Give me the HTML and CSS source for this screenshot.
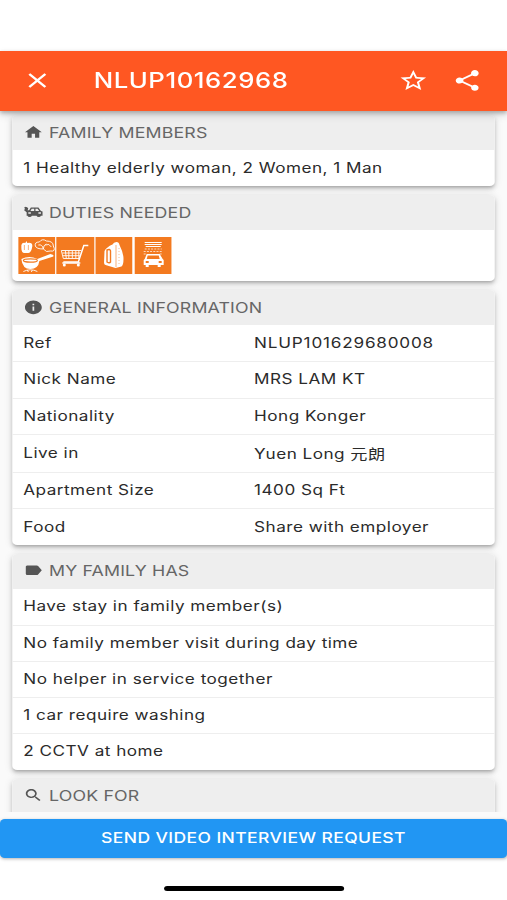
FILE: index.html
```html
<!DOCTYPE html>
<html lang="en">
<head>
<meta charset="utf-8">
<title>NLUP10162968</title>
<link rel="stylesheet" href="styles.css">
</head>
<body>
<div class="screen">
  <header class="bar">
    <svg class="icon close" viewBox="0 0 24 24"><path d="M19 6.41 17.59 5 12 10.59 6.41 5 5 6.41 10.59 12 5 17.59 6.41 19 12 13.41 17.59 19 19 17.59 13.41 12z"/></svg>
    <h1>NLUP10162968</h1>
    <svg class="icon" viewBox="0 0 24 24"><path d="M22 9.24l-7.19-.62L12 2 9.19 8.63 2 9.24l5.46 4.73L5.82 21 12 17.27 18.18 21l-1.63-7.03L22 9.24zM12 15.4l-3.76 2.27 1-4.28-3.32-2.88 4.38-.38L12 6.1l1.71 4.04 4.38.38-3.32 2.88 1 4.28L12 15.4z"/></svg>
    <svg class="icon" viewBox="0 0 24 24"><path d="M18 16.08c-.76 0-1.44.3-1.96.77L8.91 12.7c.05-.23.09-.46.09-.7s-.04-.47-.09-.7l7.05-4.11c.54.5 1.25.81 2.04.81 1.66 0 3-1.34 3-3s-1.34-3-3-3-3 1.34-3 3c0 .24.04.47.09.7L8.04 9.81C7.5 9.31 6.79 9 6 9c-1.66 0-3 1.34-3 3s1.34 3 3 3c.79 0 1.5-.31 2.04-.81l7.12 4.16c-.05.21-.08.43-.08.65 0 1.61 1.31 2.92 2.92 2.92s2.92-1.31 2.92-2.92-1.31-2.92-2.92-2.92z"/></svg>
  </header>

  <main class="content">
    <section class="card">
      <h2><svg viewBox="0 0 24 24"><path d="M10 20v-6h4v6h5v-8h3L12 3 2 12h3v8z"/></svg><span>FAMILY MEMBERS</span></h2>
      <div class="row"><span>1 Healthy elderly woman, 2 Women, 1 Man</span></div>
    </section>

    <section class="card">
      <h2><svg viewBox="0 0 24 24"><path fill-rule="evenodd" d="M1 5l2-1 2 1 1 2-1 2h2l2-4h9l3 5 2 1v6h-2a2.700 2.700 0 0 1-5.200 0h-5.600a2.700 2.700 0 0 1-5.200 0H4v-5L1 9l1-2zM10 7l-1.500 3H13V7zM14.500 7v3H19l-2-3zM6 12v2h3v-2zM18 12v2h3v-2z"/></svg><span>DUTIES NEEDED</span></h2>
      <div class="duties">
        <svg class="tile" viewBox="0 0 37 37" preserveAspectRatio="none">
          <g fill="#fff"><path d="M3 8q1-3 4-2l1-2 1 2q5-1 5 3-1 7-4 7H6Q3 16 3 11z"/><path d="M3 22q8-4 16 0l13-5 3 1v1.500l-14 4.500q-1 8-9 8-8 0-9-10z"/></g>
          <g fill="none" stroke="#fff" stroke-width=".9"><path d="M17 9q-1-4 4-4 3-4 7-1 7 0 7 5 3 6-3 5-4 2-7-2-7 0-8-3zM20 8q4-1 5 4M27 8q4-2 6 2M25 12q0-4 3-5M5 34.500q7-3.500 14 0M9 33l1 2m4-2-1 2"/></g>
          <path d="M6 8v5m4-5v5" stroke="#f37a20" stroke-width=".6"/><ellipse cx="12" cy="23.500" rx="7" ry="1.700" fill="none" stroke="#f37a20" stroke-width="1.200"/>
        </svg>
        <svg class="tile" viewBox="0 0 37 37" preserveAspectRatio="none">
          <g fill="none" stroke="#fff"><path d="M32 8.500h-4.500l-5.500 16.500H7" stroke-width="1.500"/><path d="M5 13.500h20M7 21.500h16M5 13.500l2 8M6 16h18M6.500 18.700h17M9 13.500l1 8m2.500-8v8m3.500-8v8m3.500-8v8m3-8v8" stroke-width=".9"/><path d="M6 26h18" stroke-width="1.500"/></g>
          <g fill="#fff"><circle cx="8" cy="28" r="1.500"/><circle cx="22" cy="28" r="1.500"/></g>
        </svg>
        <svg class="tile" viewBox="0 0 37 37" preserveAspectRatio="none">
          <path fill="#fff" d="M9 14q2-4 8-6.500 1-2.500 4-2.500 2.500 0 3 3 4 8 4 14 0 6-2 7.500l-6 1.500-10-3q-1.500-.5-1.500-2.500z"/>
          <path d="M11.500 13q3-1.500 3.500 1v11q-1 1.500-3.500 0z" fill="none" stroke="#f37a20" stroke-width="1.400"/>
          <path d="M20.500 8v22" stroke="#f37a20" stroke-width=".6"/><path d="M23.500 11v17" stroke="#f37a20" stroke-width=".5" stroke-dasharray="1 2"/>
        </svg>
        <svg class="tile" viewBox="0 0 37 37" preserveAspectRatio="none">
          <g fill="none" stroke="#fff"><path d="M10 5.500h17M10 7.500h17M11 9.500h15" stroke-width="1"/><path d="M10 12h17M9 14.500h19M9 17h3m13 0h3" stroke-width=".7" stroke-dasharray="2 1.200"/></g>
          <path fill="#fff" fill-rule="evenodd" d="M12 17h13l3 5 1 1v5h-3v2h-3v-2h-9v2h-3v-2H9v-5l1-1zM13 18.500l-1 3.500h13l-1-3.500zM11 24v2h3v-2zM24 24v2h3v-2z"/>
        </svg>
      </div>
    </section>

    <section class="card">
      <h2><svg viewBox="0 0 24 24"><path d="M12 2C6.480 2 2 6.480 2 12s4.480 10 10 10 10-4.480 10-10S17.520 2 12 2zm1 15h-2v-6h2v6zm0-8h-2V7h2v2z"/></svg><span>GENERAL INFORMATION</span></h2>
      <div class="row"><span>Ref</span><span class="code">NLUP101629680008</span></div>
      <div class="row"><span>Nick Name</span><span>MRS LAM KT</span></div>
      <div class="row"><span>Nationality</span><span>Hong Konger</span></div>
      <div class="row tall"><span>Live in</span><span>Yuen Long 元朗</span></div>
      <div class="row"><span>Apartment Size</span><span>1400 Sq Ft</span></div>
      <div class="row"><span>Food</span><span>Share with employer</span></div>
    </section>

    <section class="card">
      <h2><svg viewBox="0 0 24 24"><path d="M17.630 5.840C17.270 5.330 16.670 5 16 5L5 5.010C3.900 5.010 3 5.900 3 7v10c0 1.100.9 1.990 2 1.990L16 19c.67 0 1.270-.33 1.630-.84L22 12l-4.370-6.160z"/></svg><span>MY FAMILY HAS</span></h2>
      <div class="row"><span>Have stay in family member(s)</span></div>
      <div class="row"><span>No family member visit during day time</span></div>
      <div class="row"><span>No helper in service together</span></div>
      <div class="row"><span>1 car require washing</span></div>
      <div class="row"><span>2 CCTV at home</span></div>
    </section>

    <section class="card">
      <h2><svg viewBox="0 0 24 24"><path d="M15.500 14h-.79l-.28-.27C15.410 12.590 16 11.110 16 9.500 16 5.910 13.090 3 9.500 3S3 5.910 3 9.500 5.910 16 9.500 16c1.610 0 3.090-.59 4.230-1.570l.27.28v.79l5 4.990L20.490 19l-4.990-5zm-6 0C7.010 14 5 11.990 5 9.500S7.010 5 9.500 5 14 7.010 14 9.500 11.990 14 9.500 14z"/></svg><span>LOOK FOR</span></h2>
      <div class="row"></div>
    </section>
  </main>

  <footer>
    <button>SEND VIDEO INTERVIEW REQUEST</button>
    <div class="home"></div>
  </footer>
</div>
</body>
</html>
```
FILE: styles.css
```css
* { box-sizing: border-box; }
html, body { margin: 0; width: 507px; height: 900px; overflow: hidden; background: #fff; }

/* Phone layout is 414 units wide and stretched to fill the window. */
.screen {
  width: 414px;
  height: 900px;
  padding-top: 51px;
  display: flex;
  flex-direction: column;
  transform: scaleX(1.22464);
  transform-origin: 0 0;
  font-family: Inter, "Noto Sans CJK TC", sans-serif;
  font-size: 14px;
  color: #2b2b2b;
}

.bar {
  position: relative;
  z-index: 1;
  flex: none;
  height: 59.500px;
  padding: 0 20px 0 17.500px;
  display: flex;
  align-items: center;
  background: #ff5722;
  color: #fff;
  box-shadow: 0 2px 4px rgba(0,0,0,.28), 0 4px 8px rgba(0,0,0,.12);
}
.bar h1 { flex: 1; margin: 0 0 0 34px; font-size: 21px; font-weight: 500; line-height: 24px; letter-spacing: .45px; }
.icon { width: 25px; height: 25px; fill: #fff; }
.icon + .icon { margin-left: 19.500px; }

.content {
  flex: none;
  height: 701.500px;
  padding: 4.500px 10px 0;
  display: flex;
  flex-direction: column;
  gap: 9px;
  overflow: hidden;
  background: #fafafa;
}
.card {
  flex: none;
  border-radius: 4px;
  background: #fff;
  overflow: hidden;
  box-shadow: 0 3px 3px -2px rgba(0,0,0,.2), 0 3px 4px rgba(0,0,0,.14), 0 1px 8px rgba(0,0,0,.12);
}
.card h2 {
  margin: 0;
  height: 35px;
  padding: 0 9px 1px 8.500px;
  display: flex;
  align-items: center;
  gap: 5px;
  background: #eee;
  color: #666;
  font-size: 14.500px;
  font-weight: 400;
  letter-spacing: .13px;
}
.card h2 svg { width: 16.500px; height: 16.500px; fill: #555; }
.row {
  height: 36.200px;
  padding: 0 9px 2px;
  display: grid;
  grid-template-columns: 188.500px 1fr;
  align-items: center;
  letter-spacing: .39px;
  white-space: nowrap;
}
.row + .row { border-top: 1px solid #eee; }
.row.tall { height: 38.500px; }
.row .code { letter-spacing: .65px; }
.duties { height: 51px; padding: 7px 4.500px; display: flex; gap: 1.700px; }
.tile { width: 30.200px; height: 37px; background: #f37a20; }

footer { display: flex; flex-direction: column; align-items: center; background: linear-gradient(#fafafa 12px, #fff 12px); padding-top: 7px; }
button {
  width: 100%;
  height: 38.500px;
  border: 0;
  border-radius: 4px;
  padding: 0 0 1px;
  background: #2196f3;
  color: #fff;
  font: 500 14.300px Inter, sans-serif;
  letter-spacing: .33px;
  box-shadow: 0 1px 3px rgba(0,0,0,.3);
}
.home { width: 147px; height: 5px; margin-top: 28.500px; border-radius: 2.500px; background: #000; }
```
